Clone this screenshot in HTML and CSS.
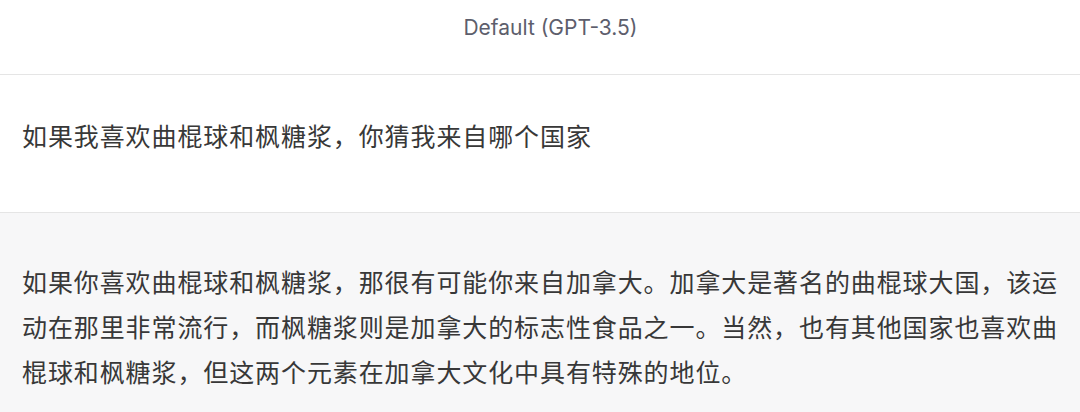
FILE: index.html
```html
<!DOCTYPE html>
<html lang="zh-CN">
<head>
  <meta charset="UTF-8">
  <title>Default (GPT-3.5)</title>
  <meta name="viewport" content="width=device-width, initial-scale=1.0">
  <link rel="stylesheet" href="styles.css">
</head>
<body>

  <!-- Model header -->
  <div class="model-bar">Default (GPT-3.5)</div>

  <!-- User message -->
  <div class="message user">
    <p>如果我喜欢曲棍球和枫糖浆，你猜我来自哪个国家</p>
  </div>

  <!-- Assistant reply -->
  <div class="message assistant">
    <p>如果你喜欢曲棍球和枫糖浆，那很有可能你来自加拿大。加拿大是著名的曲棍球大国，该运动在那里非常流行，而枫糖浆则是加拿大的标志性食品之一。当然，也有其他国家也喜欢曲棍球和枫糖浆，但这两个元素在加拿大文化中具有特殊的地位。</p>
  </div>

</body>
</html>
```

FILE: styles.css
```css
/* Reset */
* {
  margin: 0;
  padding: 0;
  box-sizing: border-box;
}

body, html {
  height: 100%;
  overflow: hidden;
  background-color: #fff;
}

body {
  font-family: Inter, "Noto Sans CJK SC", sans-serif;
  color: #343541;
}

/* Header */
.model-bar {
  height: 75px;
  padding: 16px 0 0 21px;
  text-align: center;
  font-size: 21px;
  line-height: 24px;
  color: #5d5e6c;
  border-bottom: 1px solid #e5e5e5;
}

/* Messages */
.message p {
  font-family: "Noto Sans CJK SC", sans-serif;
  font-size: 25px;
  letter-spacing: 0.9px;
  line-height: 45px;
  color: #383838;
}

.message.user {
  height: 138px;
  padding: 38px 22px 0;
  border-bottom: 1px solid #e5e5e5;
}

.message.assistant {
  background-color: #f7f7f8;
  padding: 46px 22px 0;
  min-height: 199px;
}
```
